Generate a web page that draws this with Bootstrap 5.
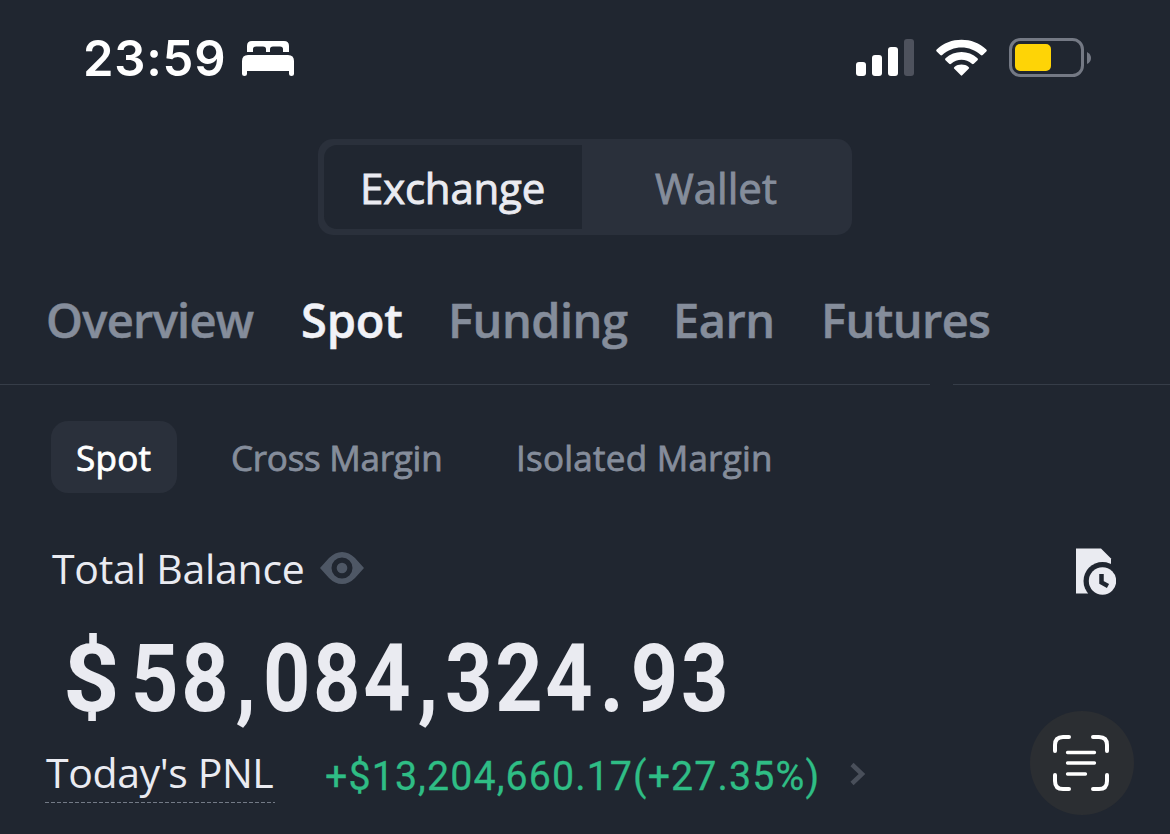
<!DOCTYPE html>
<html lang="en">
<head>
<meta charset="utf-8">
<meta name="viewport" content="width=device-width, initial-scale=1">
<title>Wallet – Spot</title>
<link rel="stylesheet" href="https://cdn.jsdelivr.net/npm/bootstrap@5.3.0/dist/css/bootstrap.min.css">
<style>
  :root { --ink: #eaebf1; --muted: #858d9b; --panel: #2a303b; --page: #202630; }
  body { background: var(--page); color: var(--ink); font-family: "Open Sans", sans-serif; width: 1170px; height: 834px; overflow: hidden; white-space: nowrap; }
  svg { display: block; flex: none; }
  .status { height: 116px; padding: 0 79px 0 83px; }
  .clock { font: 600 49px/117px Inter, sans-serif; letter-spacing: .75px; width: 159px; color: #fff; }
  .segment { width: 534px; height: 96px; margin: 23px 0 0 318px; padding: 6px; background: var(--panel); border-radius: 15px; font-size: 42px; font-weight: 500; line-height: 86px; -webkit-text-stroke: .9px currentColor; }
  .segment .on { width: 258px; padding-left: 36px; background: var(--page); border-radius: 13px 0 0 13px; letter-spacing: -.2px; }
  .segment .off { padding-left: 73px; color: var(--muted); }
  .tabs { height: 149px; padding: 55px 0 0 46px; font-size: 47px; font-weight: 600; line-height: 60px; color: var(--muted); -webkit-text-stroke: .5px currentColor; }
  .tabs .on { color: #f1f2f7; }
  .rule { height: 1px; background: #363d48; }
  .pills { height: 72px; margin: 36px 0 0 51px; font-size: 35px; font-weight: 500; line-height: 74px; color: var(--muted); -webkit-text-stroke: .8px currentColor; }
  .pills .on { width: 126px; padding-left: 25px; border-radius: 17px; background: var(--panel); color: #fff; letter-spacing: .3px; }
  .balance-label { height: 60px; margin-top: 45px; padding: 0 54px 0 52px; font-size: 41px; line-height: 60px; }
  .amount { height: 98px; margin-top: 32px; padding-left: 63px; font: 700 94px/98px Roboto, sans-serif; }
  .amount .sign { width: 68px; font-size: 94px; }
  .amount .sign span { display: inline-block; transform: scaleX(1.05); transform-origin: 0 50%; }
  .amount .digits { transform: scaleX(.88); transform-origin: 0 50%; letter-spacing: 3.1px; }
  .amount i { font-style: normal; padding: 0 4.8px; }
  .pnl { height: 60px; margin-top: 14px; padding-left: 45px; }
  .pnl .name { width: 230px; height: 60px; padding-left: 1px; font-size: 41px; line-height: 60px; letter-spacing: -.4px; }
  .dashes { height: 1px; background: repeating-linear-gradient(90deg, #737a86 0 4px, transparent 4px 6px); }
  .pnl .gain { width: 525px; padding-left: 50px; font: 400 41px/68px Roboto, sans-serif; color: #2fbd85; -webkit-text-stroke: .3px currentColor; }
  .pnl .gain span { display: inline-block; transform: scaleX(.96); transform-origin: 0 50%; letter-spacing: 1.15px; }
  .scan { right: 36.5px; bottom: 19px; width: 104px; height: 104px; padding-right: 1px; background: #2b2e32; }
</style>
</head>
<body>
<header class="status d-flex align-items-center">
  <div class="clock">23:59</div>
  <svg width="52" height="36" viewBox="0 0 52 36" fill="#fff"><path d="M5 12V6Q5 1 10 1H42Q47 1 47 6V12H41V9Q41 6.500 38 6.500H31Q28 6.500 28 9V12H24V9Q24 6.500 21 6.500H14Q11 6.500 11 9V12Z"/><path d="M0 21Q0 15 6 15H46Q52 15 52 21V34Q52 36 49.500 36Q47 36 47 34V31H5V34Q5 36 2.500 36Q0 36 0 34Z"/></svg>
  <div class="d-flex align-items-center ms-auto">
    <svg width="58" height="38" viewBox="0 0 58 38" fill="#fff"><rect y="23" width="10" height="14" rx="3"/><rect x="16" y="16" width="10" height="21" rx="3"/><rect x="32" y="8" width="10" height="29" rx="3"/><rect x="48" width="10" height="37" rx="3" fill="#4e525d"/></svg>
    <svg style="margin-left:22px" width="51" height="38" viewBox="0 0 51 38" fill="#fff"><path d="M.7 12.500Q-.3 11.500.7 10.500C14-2.500 37-2.500 50.300 10.500Q51.300 11.500 50.300 12.500L46.700 16Q45.800 16.900 44.800 16C34 6 17 6 6.200 16Q5.200 16.900 4.300 16Z"/><path d="M9.500 21.200Q8.500 20.200 9.500 19.200C18.500 11 32.500 11 41.500 19.200Q42.500 20.200 41.500 21.200L37.800 24.800Q36.900 25.700 35.900 24.800C30 19.500 21 19.500 15.100 24.800Q14.100 25.700 13.200 24.800Z"/><path d="M18.300 29.800Q17.300 28.800 18.400 27.900C22.500 24.700 28.500 24.700 32.600 27.900Q33.700 28.800 32.700 29.800L26.200 36.300Q25.500 37 24.800 36.300Z"/></svg>
    <svg style="margin-left:22px" width="82" height="40" viewBox="0 0 82 40"><rect x="1.500" y="1.500" width="72" height="36" rx="10" fill="none" stroke="#747984" stroke-width="3"/><rect x="6" y="6" width="36" height="27" rx="5" fill="#fed406"/><path d="M78 14Q82 16 82 20T78 26Z" fill="#747984"/></svg>
  </div>
</header>

<div class="segment d-flex">
  <div class="on">Exchange</div>
  <div class="off">Wallet</div>
</div>

<nav class="tabs d-flex">
  <div style="width:255px;letter-spacing:-.7px">Overview</div>
  <div class="on" style="width:147px;letter-spacing:-.2px">Spot</div>
  <div style="width:225px;letter-spacing:-.5px">Funding</div>
  <div style="width:148px;letter-spacing:-.5px">Earn</div>
  <div style="letter-spacing:-.6px">Futures</div>
</nav>
<div class="d-flex justify-content-between">
  <div class="rule" style="width:930px"></div>
  <div class="rule" style="width:217px"></div>
</div>

<nav class="pills d-flex">
  <div class="on">Spot</div>
  <div style="width:339px;padding-left:54px;letter-spacing:-.25px">Cross Margin</div>
  <div style="letter-spacing:.25px">Isolated Margin</div>
</nav>

<section>
  <div class="balance-label d-flex align-items-center">
    <div style="width:268px;letter-spacing:-.25px">Total Balance</div>
    <svg width="44" height="34" viewBox="0 0 44 34"><path fill-rule="evenodd" fill="#4e5765" d="M0 17L9 7Q15 1 22 1T35 7L44 17L35 27Q29 33 22 33T9 27ZM22 6.500A10.500 10.500 0 1 0 22 27.500A10.500 10.500 0 1 0 22 6.500Z"/><circle cx="22" cy="17" r="5.300" fill="#4e5765"/></svg>
    <svg class="ms-auto" style="margin-top:7px" width="40" height="48" viewBox="0 0 40 48"><path fill="#eaebf1" d="M0 .5H25L35 10.500V17L12 45.500H0Z"/><circle cx="26.500" cy="33" r="19" fill="#202630"/><circle cx="26.500" cy="33" r="13.700" fill="#eaebf1"/><path d="M25.500 26V34.500L32 38" fill="none" stroke="#202630" stroke-width="4.500"/></svg>
  </div>
  <div class="amount d-flex">
    <div class="sign"><span>$</span></div>
    <div class="digits">58<i>,</i>084<i>,</i>324<i>.</i>93</div>
  </div>
  <div class="pnl d-flex">
    <div><div class="name">Today's PNL</div><div class="dashes"></div></div>
    <div class="gain"><span>+$13,204,660.17(+27.35%)</span></div>
    <svg style="margin:20px 0 0 50px" width="16" height="24" viewBox="0 0 16 24"><path d="M2 2.500L12 12L2 21.500" fill="none" stroke="#494f5a" stroke-width="4.500"/></svg>
  </div>
</section>

<div class="scan position-absolute rounded-circle d-flex align-items-center justify-content-center">
  <svg width="56" height="56" viewBox="0 0 56 56" fill="none" stroke="#fff" stroke-linecap="round"><path stroke-width="4" d="M2 16V10Q2 2 10 2H16M40 2H46Q54 2 54 10V16M54 40V46Q54 54 46 54H40M16 54H10Q2 54 2 46V40"/><path stroke-width="3.300" d="M14.500 17.500H41.500M14.500 28H41.500M14.500 39H32.500"/></svg>
</div>
<script src="https://cdn.jsdelivr.net/npm/bootstrap@5.3.0/dist/js/bootstrap.bundle.min.js"></script>
</body>
</html>
